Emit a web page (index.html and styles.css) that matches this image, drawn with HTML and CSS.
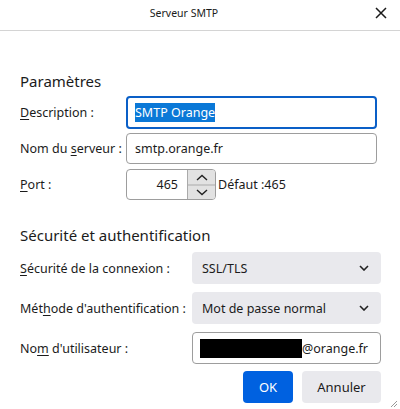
FILE: index.html
```html
<!DOCTYPE html>
<html lang="fr">
<head>
<meta charset="utf-8">
<title>Serveur SMTP</title>
<link rel="stylesheet" href="styles.css">
</head>
<body>
<div class="dialog">
  <header class="titlebar">
    <span class="title">Serveur SMTP</span>
    <svg class="close" width="12" height="12" viewBox="0 0 12 12"><path d="M1 1 L11 11 M11 1 L1 11" stroke="#1a1a1a" stroke-width="1.5" fill="none"/></svg>
  </header>
  <main class="content">
    <h2 class="heading h1">Paramètres</h2>
    <div class="grid grid1">
      <label class="lbl"><u>D</u>escription :</label>
      <div class="field focus"><span class="sel">SMTP Orange</span></div>
      <label class="lbl">Nom du <u>s</u>erveur :</label>
      <div class="field">smtp.orange.fr</div>
      <label class="lbl"><u>P</u>ort :</label>
      <div class="portrow">
        <div class="field port">
          <span class="portval">465</span>
          <span class="spin">
            <svg width="28" height="30" viewBox="0 0 28 30"><path d="M9 10 L14 5.5 L19 10" stroke="#222" stroke-width="1.4" fill="none"/><line x1="0" y1="15" x2="28" y2="15" stroke="#aaa" stroke-width="1"/><path d="M9 20 L14 24.5 L19 20" stroke="#222" stroke-width="1.4" fill="none"/></svg>
          </span>
        </div>
        <span class="def">Défaut :465</span>
      </div>
    </div>
    <h2 class="heading h2">Sécurité et authentification</h2>
    <div class="grid grid2">
      <label class="lbl"><u>S</u>écurité de la connexion :</label>
      <div class="select">SSL/TLS<svg class="chev" width="10" height="6" viewBox="0 0 10 6"><path d="M1 1 L5 5 L9 1" stroke="#222" stroke-width="1.6" fill="none"/></svg></div>
      <label class="lbl">Mét<u>h</u>ode d'authentification :</label>
      <div class="select">Mot de passe normal<svg class="chev" width="10" height="6" viewBox="0 0 10 6"><path d="M1 1 L5 5 L9 1" stroke="#222" stroke-width="1.6" fill="none"/></svg></div>
      <label class="lbl">No<u>m</u> d'utilisateur :</label>
      <div class="field user"><span class="redact"></span><span>@orange.fr</span></div>
    </div>
    <div class="buttons">
      <button class="btn ok">OK</button>
      <button class="btn cancel">Annuler</button>
    </div>
  </main>
  <svg class="grip" width="9" height="9" viewBox="0 0 9 9"><path d="M8 2 L2 8 M8 5 L5 8" stroke="#999" stroke-width="1" fill="none"/></svg>
</div>
</body>
</html>
```
FILE: styles.css
```css
* { box-sizing: border-box; }
html, body { margin: 0; padding: 0; background: #fff; }
body {
  font-family: "Noto Sans", "Open Sans", sans-serif;
  font-size: 12.5px;
  color: #1b1b1b;
  width: 400px;
  height: 409px;
  overflow: hidden;
}
.dialog { position: relative; width: 400px; height: 409px; }
.titlebar {
  height: 31px;
  border-bottom: 1px solid #d4d4d4;
  display: flex;
  align-items: flex-start;
  justify-content: center;
  padding: 5px 32px 0 0;
  position: relative;
}
.title { font-size: 10.5px; line-height: 16px; color: #1b1b1b; }
.close { position: absolute; right: 13px; top: 7px; }
.content { padding: 0 19px 0 20px; }
.heading { font-size: 15px; font-weight: normal; margin: 0; line-height: 20px; }
.h1 { margin-top: 40px; margin-bottom: 5px; }
.h2 { margin-top: 25px; margin-bottom: 7px; }
.grid { display: grid; align-items: center; row-gap: 4px; }
.grid1 { grid-template-columns: 106px 251px; }
.grid2 { grid-template-columns: 172px 189px; row-gap: 8px; }
.lbl u, .lbl { text-underline-offset: 2px; }
.field {
  height: 31px;
  border: 1px solid #9d9d9d;
  border-radius: 4px;
  display: flex;
  align-items: center;
  padding: 0 8px;
  background: #fff;
}
.field.focus { height: 33px; border: 2px solid #0a5fc7; padding: 0 7px; }
.sel { background: #0a78d7; color: #fff; padding: 1px 0; }
.portrow { display: flex; align-items: center; margin-top: 1px; }
.field.port { width: 90px; height: 31px; padding: 0; justify-content: flex-end; overflow: hidden; }
.portval { margin-right: 9px; }
.spin {
  width: 28px; height: 29px;
  background: #e2e2e2;
  border-left: 1px solid #aaa;
  display: block;
}
.spin svg { display: block; }
.def { margin-left: 2px; }
.select {
  height: 32px;
  background: #e9e9ed;
  border-radius: 4px;
  display: flex;
  align-items: center;
  justify-content: space-between;
  padding: 0 12px 0 10px;
}
.chev { display: block; }
.field.user { height: 32px; padding: 0 6px 0 7px; justify-content: flex-start; }
.redact { width: 102px; height: 19px; background: #000; display: block; flex: none; }
.buttons { display: flex; justify-content: flex-end; gap: 9px; margin-top: 7px; padding-right: 0; }
.btn {
  font-family: inherit;
  font-size: 13px;
  height: 32px;
  border: none;
  border-radius: 4px;
  padding: 0;
}
.ok { width: 50px; background: #0061e0; color: #fff; }
.cancel { width: 79px; background: #e9e9ed; color: #1b1b1b; }
.grip { position: absolute; right: 2px; bottom: 1px; }
```
